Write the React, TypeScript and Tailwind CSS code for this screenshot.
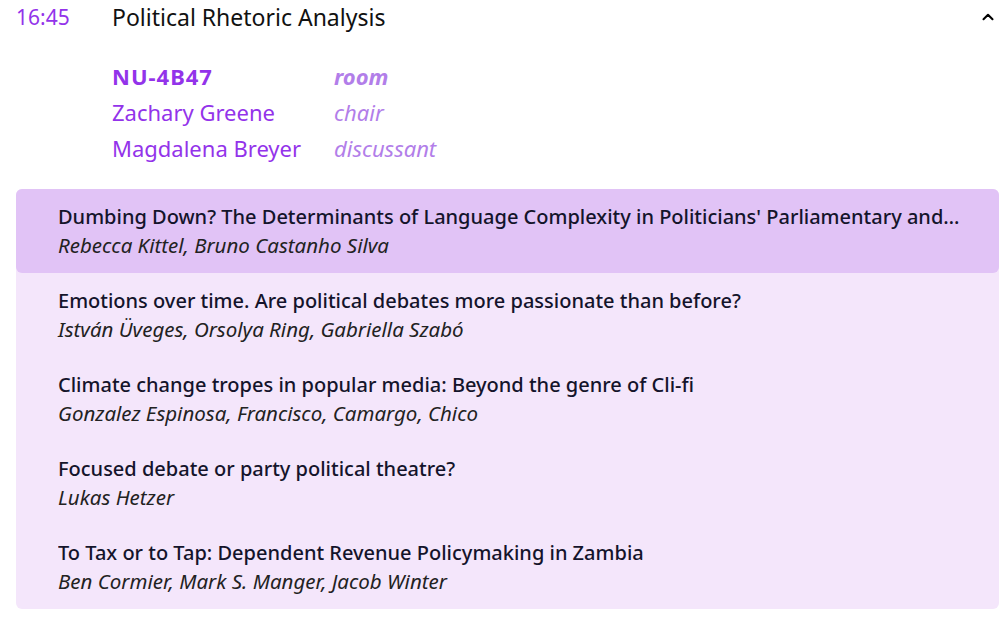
import { ChevronUp } from "lucide-react";

const papers = [
  {
    title:
      "Dumbing Down? The Determinants of Language Complexity in Politicians' Parliamentary and Public Speeches",
    authors: "Rebecca Kittel, Bruno Castanho Silva",
    active: true,
  },
  {
    title: "Emotions over time. Are political debates more passionate than before?",
    authors: "István Üveges, Orsolya Ring, Gabriella Szabó",
  },
  {
    title: "Climate change tropes in popular media: Beyond the genre of Cli-fi",
    authors: "Gonzalez Espinosa, Francisco, Camargo, Chico",
  },
  {
    title: "Focused debate or party political theatre?",
    authors: "Lukas Hetzer",
  },
  {
    title: "To Tax or to Tap: Dependent Revenue Policymaking in Zambia",
    authors: "Ben Cormier, Mark S. Manger, Jacob Winter",
  },
];

export default function App() {
  return (
    <div
      className="w-[1001px] h-[626px] bg-white overflow-hidden"
      style={{ fontFamily: '"Noto Sans", "Open Sans", sans-serif' }}
    >
      <div className="pl-4 pr-1">
        <div className="flex items-center h-[34px] leading-7">
          <span className="w-24 text-[21px] text-[#9333ea]">16:45</span>
          <span className="flex-1 text-[23px] text-[#111]">Political Rhetoric Analysis</span>
          <ChevronUp className="h-[18px] w-[18px] text-black" strokeWidth={2.75} />
        </div>

        <div className="mt-[24px] ml-24 grid grid-cols-[222px_1fr] text-[22px] leading-9 text-[#9333ea]">
          <span className="font-bold tracking-[1px]">NU-4B47</span>
          <span className="italic font-bold text-[#b27ee9]">room</span>
          <span>Zachary Greene</span>
          <span className="italic text-[#b27ee9]">chair</span>
          <span>Magdalena Breyer</span>
          <span className="italic text-[#b27ee9]">discussant</span>
        </div>
      </div>

      <ul className="mt-[23px] ml-4 mr-[2px] rounded-md bg-[#f4e6fb]">
        {papers.map((p) => (
          <li
            key={p.title}
            className={
              "py-[14px] pl-[42px] pr-9 rounded-md leading-7 " +
              (p.active ? "bg-[#e1c3f6]" : "")
            }
          >
            <div className="truncate text-[20px] text-[#14142b] font-medium">{p.title}</div>
            <div className="italic text-[20.5px] text-[#222]">{p.authors}</div>
          </li>
        ))}
      </ul>
    </div>
  );
}
